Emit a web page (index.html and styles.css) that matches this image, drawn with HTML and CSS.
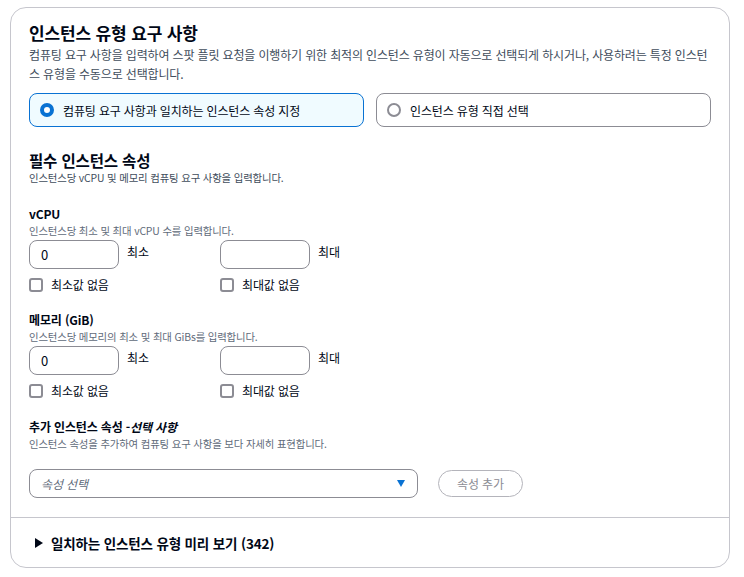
FILE: index.html
```html
<!DOCTYPE html>
<html lang="ko">
<head>
<meta charset="utf-8">
<link rel="stylesheet" href="styles.css">
</head>
<body>
<div class="panel">
  <div class="body">
    <h1 class="title">인스턴스 유형 요구 사항</h1>
    <p class="desc">컴퓨팅 요구 사항을 입력하여 스팟 플릿 요청을 이행하기 위한 최적의 인스턴스 유형이 자동으로 선택되게 하시거나, 사용하려는 특정 인스턴스 유형을 수동으로 선택합니다.</p>
    <div class="tiles">
      <div class="tile selected"><span class="radio on"></span><span>컴퓨팅 요구 사항과 일치하는 인스턴스 속성 지정</span></div>
      <div class="tile"><span class="radio"></span><span>인스턴스 유형 직접 선택</span></div>
    </div>

    <h2 class="h2">필수 인스턴스 속성</h2>
    <p class="sub">인스턴스당 vCPU 및 메모리 컴퓨팅 요구 사항을 입력합니다.</p>

    <div class="field">
      <div class="label">vCPU</div>
      <div class="hint">인스턴스당 최소 및 최대 vCPU 수를 입력합니다.</div>
      <div class="pair">
        <div class="col">
          <div class="inrow"><div class="input">0</div><span class="inlabel">최소</span></div>
          <div class="check"><span class="box"></span>최소값 없음</div>
        </div>
        <div class="col">
          <div class="inrow"><div class="input"></div><span class="inlabel">최대</span></div>
          <div class="check"><span class="box"></span>최대값 없음</div>
        </div>
      </div>
    </div>

    <div class="field">
      <div class="label">메모리 (GiB)</div>
      <div class="hint">인스턴스당 메모리의 최소 및 최대 GiBs를 입력합니다.</div>
      <div class="pair">
        <div class="col">
          <div class="inrow"><div class="input">0</div><span class="inlabel">최소</span></div>
          <div class="check"><span class="box"></span>최소값 없음</div>
        </div>
        <div class="col">
          <div class="inrow"><div class="input"></div><span class="inlabel">최대</span></div>
          <div class="check"><span class="box"></span>최대값 없음</div>
        </div>
      </div>
    </div>

    <div class="field extra">
      <div class="label">추가 인스턴스 속성 -<em>선택 사항</em></div>
      <div class="hint">인스턴스 속성을 추가하여 컴퓨팅 요구 사항을 보다 자세히 표현합니다.</div>
      <div class="selrow">
        <div class="select"><em>속성 선택</em><span class="caret"></span></div>
        <div class="btn">속성 추가</div>
      </div>
    </div>
  </div>
  <div class="footer"><span class="tri"></span>일치하는 인스턴스 유형 미리 보기 (342)</div>
</div>
</body>
</html>
```
FILE: styles.css
```css
* { box-sizing: border-box; }
html, body { margin: 0; padding: 0; background: #fff; }
body {
  font-family: "Noto Sans CJK KR", "Noto Sans", sans-serif;
  color: #000716;
  letter-spacing: -0.15px;
}
.panel {
  margin: 7px 0 0 10px;
  width: 720px;
  height: 561px;
  border: 1px solid #c6c6cd;
  border-radius: 16px;
  display: flex;
  flex-direction: column;
}
.body { padding: 12px 18px 0 18px; flex: 1; }
.title { font-size: 17px; font-weight: 700; margin: 0; line-height: 26px; }
.desc { font-size: 12px; color: #414d5c; margin: -1px 0 0; line-height: 19px; }
.tiles { display: flex; gap: 12px; margin-top: 10px; }
.tile {
  flex: 1;
  height: 34px;
  border: 1px solid #8c8c94;
  border-radius: 8px;
  display: flex;
  align-items: center;
  gap: 9px;
  padding-left: 10px;
  font-size: 12px;
}
.tile.selected { border-color: #0972d3; background: #f0fbff; }
.radio {
  width: 14px; height: 14px; border-radius: 50%;
  border: 2px solid #8c8c94; flex: none; background: #fff;
}
.radio.on { border: 4px solid #0972d3; }
.h2 { font-size: 15.5px; font-weight: 700; margin: 22px 0 0; line-height: 22px; }
.sub { font-size: 10.4px; margin: -1px 0 0; line-height: 15px; color: #414d5c; }
.field { margin-top: 20px; }
.field + .field { margin-top: 17px; }
.field.extra { margin-top: 18px; }
.label { font-size: 12px; font-weight: 700; line-height: 17px; }
.label em { font-style: italic; }
.hint { font-size: 10.4px; color: #5f6b7a; line-height: 15px; margin-top: 1px; }
.pair { display: flex; margin-top: 2px; }
.col { width: 191px; }
.inrow { display: flex; align-items: flex-start; gap: 8px; }
.input {
  width: 90px; height: 29px;
  border: 1px solid #8c8c94; border-radius: 8px;
  font-size: 13px; line-height: 27px; padding-left: 11px;
}
.inlabel { font-size: 12px; line-height: 17px; margin-top: 3px; }
.check { display: flex; align-items: center; gap: 8px; font-size: 12px; margin-top: 7px; line-height: 18px; }
.box { width: 14px; height: 14px; border: 2px solid #8c8c94; border-radius: 3px; flex: none; }
.selrow { display: flex; align-items: center; margin-top: 18px; gap: 20px; }
.select {
  width: 389px; height: 29px;
  border: 1px solid #8c8c94; border-radius: 8px;
  display: flex; align-items: center; justify-content: space-between;
  padding: 0 12px 0 11px;
  font-size: 12px; color: #5f6b7a;
}
.select em { font-style: italic; }
.caret {
  width: 0; height: 0;
  border-left: 4.5px solid transparent;
  border-right: 4.5px solid transparent;
  border-top: 7px solid #0972d3;
}
.btn {
  width: 85px; height: 27px;
  border: 1px solid #b4b4bb; border-radius: 14px;
  font-size: 12px; color: #8c8c94;
  display: flex; align-items: center; justify-content: center;
}
.footer {
  border-top: 1px solid #c6c6cd;
  height: 50px;
  display: flex; align-items: center;
  padding-left: 24px;
  font-size: 13.5px; font-weight: 700;
  gap: 8px;
}
.tri {
  width: 0; height: 0;
  border-top: 5px solid transparent;
  border-bottom: 5px solid transparent;
  border-left: 8px solid #000716;
}
```
